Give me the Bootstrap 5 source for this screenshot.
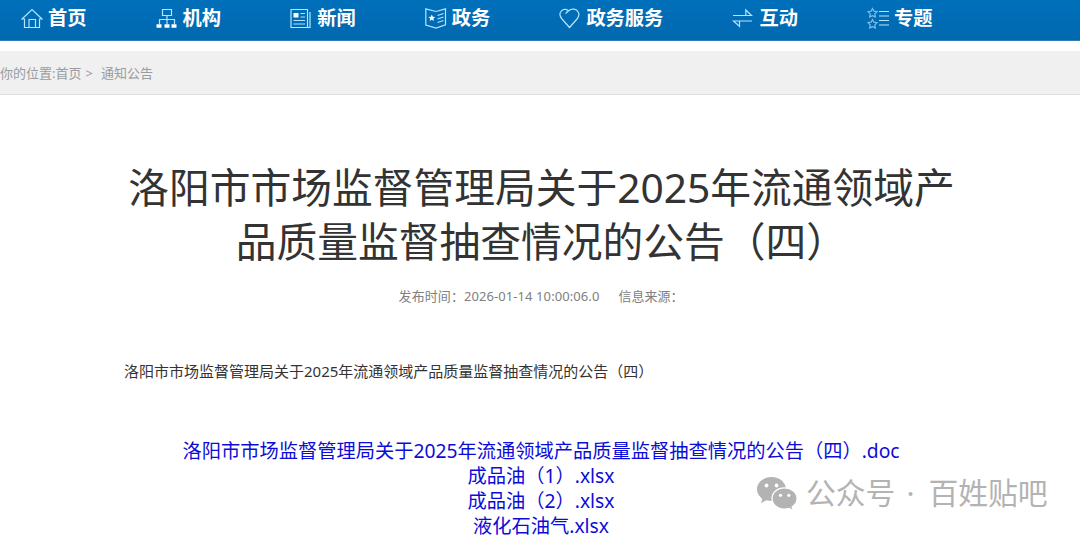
<!DOCTYPE html>
<html lang="zh-CN">
<head>
  <meta charset="UTF-8">
  <meta name="viewport" content="width=device-width, initial-scale=1.0">
  <title>洛阳市市场监督管理局</title>
  <link href="https://cdn.jsdelivr.net/npm/bootstrap@5.3.0/dist/css/bootstrap.min.css" rel="stylesheet">
  <style>
    body {
      font-family: "Noto Sans", "Noto Sans CJK SC", sans-serif;
      color: #333;
    }
    .main-nav {
      height: 41px;
      background: linear-gradient(#0070bb, #0068af);
      border-bottom: 1px solid #2a7fbb;
    }
    .main-nav .nav-link {
      height: 36px;
      padding: 0 48.1px 0 21px;
      gap: 5px;
      color: #fff;
      font-size: 19.25px;
      font-weight: 700;
      line-height: 36px;
    }
    .main-nav svg {
      width: 22px;
      height: 22px;
      fill: none;
      stroke: #b5e4fb;
      stroke-width: 1.2;
    }
    .crumb-bar {
      height: 44px;
      margin-top: 10px;
      padding-top: 2px;
      background: #f0f0f0;
      border-bottom: 1px solid #ddd;
      color: #999ca3;
      font-size: 13px;
    }
    .crumb-bar a { color: inherit; }
    .article { width: 832px; margin: 0 auto; padding-top: 65px; }
    .article-title {
      padding-left: 3px;
      font-size: 40.75px;
      font-weight: 400;
      line-height: 54px;
    }
    .article-info {
      margin-top: 18px;
      padding-left: 2px;
      gap: 19px;
      color: #808080;
      font-size: 13px;
      line-height: 20px;
    }
    .publish-time { letter-spacing: .08px; }
    .article-text {
      margin-top: 54px;
      font-size: 15px;
      line-height: 22px;
    }
    .file-list {
      margin-top: 56px;
      padding-left: 2px;
      font-size: 19.25px;
      line-height: 25px;
    }
    .file-list a { color: #0c0cd8; }
    .file-list a:last-child { margin-top: 2px; line-height: 21px; }
    .watermark {
      left: 756px;
      top: 474px;
      color: #b3b3b3;
      font-size: 29.8px;
      line-height: 38px;
    }
    .watermark svg { width: 42px; height: 36px; }
    .watermark .dot { margin: 0 14px 0 11px; }
  </style>
</head>
<body class="position-relative">
  <nav class="main-nav">
    <ul class="nav flex-nowrap text-nowrap">
      <li class="nav-item"><a class="nav-link d-flex align-items-center" href="#">
        <svg viewBox="0 0 22 22"><path d="M1 12 11 2.500 21 12h-2.500v8.500h-15V12zM8 20v-7.500h6.500V20"/></svg>首页</a></li>
      <li class="nav-item"><a class="nav-link d-flex align-items-center" href="#">
        <svg viewBox="0 0 22 22"><path d="M6.500 2.500h9v6h-9zM11 8.500V17M3.500 17v-4.500h15V17"/><path d="M.5 17.200h5v3.500h-5zM8.500 17.200h5v3.500h-5zM15.500 17.200h5v3.500h-5z" fill="#fff" stroke="none"/></svg>机构</a></li>
      <li class="nav-item"><a class="nav-link d-flex align-items-center" href="#">
        <svg viewBox="0 0 22 22"><path d="M1 2.500h16.500v18H1zM17.500 20.500h2.500V5M10.500 6.500h4.500M10.500 10h4.500M3.500 13.500H15M3.500 17H15"/><path d="M3.500 6h5v4.500h-5z" fill="#fff" stroke="none"/></svg>新闻</a></li>
      <li class="nav-item"><a class="nav-link d-flex align-items-center" href="#">
        <svg viewBox="0 0 22 22"><path d="M.8 1.800 11 4.500l9.500-2.700v16L11 21 .8 18zM12.500 8.500l6-2M12.500 12l6-2M12.500 15.500l6-2"/><path d="m6.800 7.500 1 2.300 2.500.2-1.900 1.600.6 2.500-2.200-1.300-2.100 1.300.5-2.500-1.900-1.600 2.500-.2z" fill="#fff" stroke="none"/></svg>政务</a></li>
      <li class="nav-item"><a class="nav-link d-flex align-items-center" href="#">
        <svg viewBox="0 0 22 22"><path d="M6.500 6.500 10 3.500C13 1 17.500 2 19.200 5c1.500 2.800.5 5-1.200 7l-7.500 8.500L3 12C.5 9 .3 6 2.500 3.800 4.500 2 7.500 2 9 3.500"/></svg>政务服务</a></li>
      <li class="nav-item"><a class="nav-link d-flex align-items-center" href="#">
        <svg viewBox="0 0 22 22"><path d="M1 8.500h18.500L13.800 3v5.500M20 14H1.500l6 5.500V14"/></svg>互动</a></li>
      <li class="nav-item"><a class="nav-link d-flex align-items-center" href="#">
        <svg viewBox="0 0 22 22"><g stroke="#7fbce6"><path id="star" d="m5.500 1.500 1.400 2.700 3.100.5-2.200 2.200.5 3-2.800-1.300L2.700 9.900l.5-3L1 4.700l3.100-.5z"/><use href="#star" y="11"/></g><path d="M12 4.500h10M12 9h10M12 13.500h10M12 18h10"/></svg>专题</a></li>
    </ul>
  </nav>

  <div class="crumb-bar d-flex align-items-center">
    <span>你的位置:</span><a class="text-decoration-none" href="#">首页</a><span class="ms-1 me-2">&gt;</span><a class="text-decoration-none" href="#">通知公告</a>
  </div>

  <main class="article">
    <h1 class="article-title text-center mb-0">洛阳市市场监督管理局关于2025年流通领域产品质量监督抽查情况的公告（四）</h1>
    <div class="article-info d-flex justify-content-center">
      <span class="publish-time">发布时间：2026-01-14 10:00:06.0</span>
      <span>信息来源：</span>
    </div>
    <p class="article-text mb-0">洛阳市市场监督管理局关于2025年流通领域产品质量监督抽查情况的公告（四）</p>
    <div class="file-list d-flex flex-column align-items-center text-nowrap">
      <a class="text-decoration-none" href="#">洛阳市市场监督管理局关于2025年流通领域产品质量监督抽查情况的公告（四）.doc</a>
      <a class="text-decoration-none" href="#">成品油（1）.xlsx</a>
      <a class="text-decoration-none" href="#">成品油（2）.xlsx</a>
      <a class="text-decoration-none" href="#">液化石油气.xlsx</a>
    </div>
  </main>

  <div class="watermark position-absolute d-flex align-items-center text-nowrap">
    <svg viewBox="0 0 42 36">
      <path fill="#b3b3b3" d="M15.500 2C7.500 2 1 7.500 1 14.300c0 3.900 2 7.200 5.300 9.500L5 28l5.200-2.700c1.800.5 3.600.8 5.300.8 8 0 14.500-5.300 14.500-11.900S23.500 2 15.500 2z"/>
      <path fill="#b3b3b3" stroke="#fff" stroke-width="1.300" d="M28.500 12.800c-7.200 0-12.500 4.800-12.500 10.700s5.300 10.700 12.500 10.700c1.600 0 3-.3 4.500-.7l4.500 2.300-1.300-3.900c3-2 4.900-5 4.900-8.400 0-5.900-5.600-10.700-12.600-10.700z"/>
      <g fill="#fff"><circle cx="10.500" cy="10.500" r="1.900"/><circle cx="20.500" cy="10.500" r="1.900"/><circle cx="24.500" cy="20.300" r="1.600"/><circle cx="32.800" cy="20.300" r="1.600"/></g>
    </svg>
    <span class="ms-2">公众号</span><span class="dot">·</span><span>百姓贴吧</span>
  </div>
  <script src="https://cdn.jsdelivr.net/npm/bootstrap@5.3.0/dist/js/bootstrap.bundle.min.js"></script>
</body>
</html>
